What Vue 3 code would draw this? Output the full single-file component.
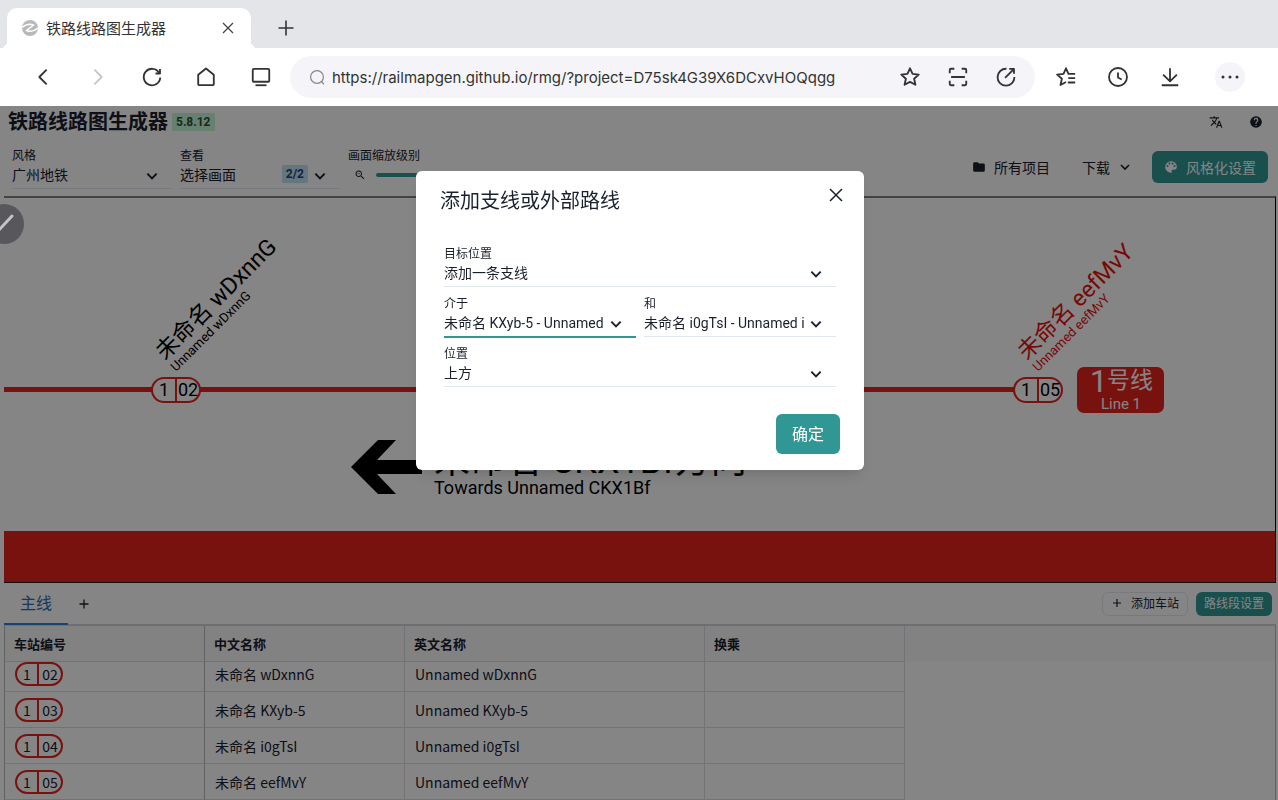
<script setup>
import { onMounted, ref } from 'vue'

const url = ref('https://railmapgen.github.io/rmg/?project=D75sk4G39X6DCxvHOQqgg')
const zoom = ref(96)
const gridBody = ref(null)

const stations = [
  { num: '02', name: '未命名 wDxnnG', en: 'Unnamed wDxnnG' },
  { num: '03', name: '未命名 KXyb-5', en: 'Unnamed KXyb-5' },
  { num: '04', name: '未命名 i0gTsI', en: 'Unnamed i0gTsI' },
  { num: '05', name: '未命名 eefMvY', en: 'Unnamed eefMvY' },
]

const mapStations = [
  { x: 171, num: '02', name: '未命名 wDxnnG', en: 'Unnamed wDxnnG', fill: '#000' },
  { x: 1033, num: '05', name: '未命名 eefMvY', en: 'Unnamed eefMvY', fill: '#e70f0f' },
]

onMounted(() => {
  gridBody.value.scrollTop = gridBody.value.scrollHeight
})
</script>

<template>
  <div class="browser">
    <div class="tabstrip">
      <div class="tab">
        <svg class="favicon" width="16" height="16" viewBox="0 0 16 16">
          <circle cx="8" cy="8" r="8" fill="#b9b9bb" />
          <path d="M0 7.500C3.500 4.500 8 3.500 11.500 5L4.500 10.500C8 12 12.500 11 16 8" fill="none" stroke="#fff" stroke-width="1.500" stroke-linejoin="round" />
        </svg>
        <span class="tab-title">铁路线路图生成器</span>
        <button class="icon-btn tab-close" aria-label="关闭标签页">
          <svg width="12" height="12" viewBox="0 0 12 12" fill="none" stroke="#444" stroke-width="1.300"><path d="M1 1l10 10M11 1L1 11" /></svg>
        </button>
      </div>
      <button class="icon-btn new-tab" aria-label="新标签页">
        <svg width="16" height="16" viewBox="0 0 16 16" fill="none" stroke="#333" stroke-width="1.600"><path d="M8 .5v15M.5 8h15" /></svg>
      </button>
    </div>

    <div class="toolbar">
      <nav class="nav">
        <button class="icon-btn" aria-label="后退">
          <svg class="ico" viewBox="0 0 24 24"><path d="M16 4l-8 8 8 8" stroke-width="2" /></svg>
        </button>
        <button class="icon-btn" aria-label="前进">
          <svg class="ico faint" viewBox="0 0 24 24"><path d="M8 4l8 8-8 8" stroke-width="2" /></svg>
        </button>
        <button class="icon-btn" aria-label="刷新">
          <svg class="ico" viewBox="0 0 24 24"><path d="M19.800 7.500A9 9 0 1 0 21 12.500M20.700 3.300v4.900h-4.900" /></svg>
        </button>
        <button class="icon-btn" aria-label="主页">
          <svg class="ico" viewBox="0 0 24 24"><path d="M3.500 9.500L12 2.800l8.500 6.700v10.200a1.200 1.200 0 0 1-1.200 1.200H4.700a1.200 1.200 0 0 1-1.200-1.200z" /></svg>
        </button>
        <button class="icon-btn" aria-label="电脑模式">
          <svg class="ico" viewBox="0 0 24 24"><rect x="3" y="3.200" width="18" height="14" rx="1.200" /><path d="M6 21h12" /></svg>
        </button>
      </nav>
      <div class="address">
        <svg width="17" height="17" viewBox="0 0 17 17" fill="none" stroke="#888" stroke-width="1.200"><circle cx="8" cy="8" r="6.400" /><path d="M12.500 12.500l2.500 2.800" /></svg>
        <input v-model="url" class="url" aria-label="网址" />
        <button class="icon-btn" aria-label="收藏">
          <svg class="ico" viewBox="0 0 24 24"><path d="M12 2.500l2.800 6.100 6.700.8-5 4.500 1.400 6.600L12 17.300l-5.900 3.200 1.400-6.600-5-4.500 6.700-.8z" /></svg>
        </button>
        <button class="icon-btn" aria-label="扫描">
          <svg class="ico" viewBox="0 0 24 24"><path d="M3 8V4.300A1.300 1.300 0 0 1 4.300 3H8M16 3h3.700A1.300 1.300 0 0 1 21 4.300V8M21 16v3.700a1.300 1.300 0 0 1-1.300 1.300H16M8 21H4.300A1.300 1.300 0 0 1 3 19.700V16M4.500 12h15" /></svg>
        </button>
        <button class="icon-btn" aria-label="分享">
          <svg class="ico" viewBox="0 0 24 24"><path d="M12.500 3A9.200 9.200 0 1 0 21.200 12M11 13l9.500-9.500M15.500 3.200h5.200v5.200" /></svg>
        </button>
      </div>
      <div class="actions">
        <button class="icon-btn" aria-label="收藏夹">
          <svg class="ico" viewBox="0 0 24 24"><path d="M22 8.500h-7.300L12 2.500 9.300 8.500l-7 .9 5.200 4.500L6 20.700l6-3.200M14.500 13.200H22M14 18h8" /></svg>
        </button>
        <button class="icon-btn" aria-label="历史">
          <svg class="ico" viewBox="0 0 24 24"><circle cx="12" cy="12" r="9.800" /><path d="M12 7v5.500l4 2.200" /></svg>
        </button>
        <button class="icon-btn" aria-label="下载列表">
          <svg class="ico" viewBox="0 0 24 24"><path d="M12 2.500v14M4.500 9.500l7.500 7.200 7.500-7.200M3 21h18" /></svg>
        </button>
        <button class="icon-btn more" aria-label="更多">
          <svg width="30" height="30" viewBox="0 0 30 30"><circle cx="15" cy="15" r="15" fill="#f5f5f9" /><g fill="#333"><circle cx="8" cy="15" r="1.500" /><circle cx="15" cy="15" r="1.500" /><circle cx="22" cy="15" r="1.500" /></g></svg>
        </button>
      </div>
    </div>

    <div class="rmg">
      <header class="header">
        <h1>铁路线路图生成器</h1>
        <span class="badge green">5.8.12</span>
        <div class="header-icons">
          <button class="icon-btn" aria-label="语言">
            <svg width="14" height="14" viewBox="0 0 24 24" fill="#1a202c"><path d="M12.870 15.070l-2.540-2.510.03-.03A17.500 17.500 0 0 0 14.070 6H17V4h-7V2H8v2H1v2h11.170C11.500 7.920 10.440 9.750 9 11.350 8.070 10.320 7.300 9.190 6.690 8h-2c.73 1.630 1.730 3.170 2.980 4.560l-5.090 5.020L4 19l5-5 3.110 3.110.76-2.040zM18.500 10h-2L12 22h2l1.120-3h4.750L21 22h2l-4.500-12zm-2.620 7l1.620-4.330L19.120 17h-3.240z" /></svg>
          </button>
          <button class="icon-btn" aria-label="帮助">
            <svg width="14" height="14" viewBox="0 0 24 24" fill="#1a202c"><path d="M12 2a10 10 0 1 0 0 20 10 10 0 0 0 0-20zm1 17h-2v-2h2v2zm2.070-7.750l-.9.920C13.450 12.900 13 13.500 13 15h-2v-.5c0-1.100.45-2.100 1.170-2.830l1.240-1.260A2 2 0 1 0 10 9H8a4 4 0 1 1 7.070 2.250z" /></svg>
          </button>
        </div>
      </header>

      <div class="controls">
        <div class="field w160">
          <label for="style">风格</label>
          <div class="select-wrap">
            <select id="style"><option>广州地铁</option></select>
            <svg class="chev" viewBox="0 0 12 12"><path d="M2 4l4 4 4-4" /></svg>
          </div>
        </div>
        <div class="field w160">
          <label for="view">查看</label>
          <div class="select-wrap">
            <select id="view"><option>选择画面</option></select>
            <span class="badge blue">2/2</span>
            <svg class="chev" viewBox="0 0 12 12"><path d="M2 4l4 4 4-4" /></svg>
          </div>
        </div>
        <div class="field w160">
          <label for="zoom">画面缩放级别</label>
          <div class="slider">
            <svg width="12" height="12" viewBox="0 0 24 24" fill="#1a202c"><path d="M15.500 14h-.8l-.3-.3A6.500 6.500 0 1 0 13.700 14.400l.3.300v.8l5 5 1.500-1.500-5-5zm-6 0a4.500 4.500 0 1 1 0-9 4.500 4.500 0 0 1 0 9zM7 9h5v1H7z" /></svg>
            <input id="zoom" v-model="zoom" type="range" min="0" max="100" />
          </div>
        </div>
        <div class="spacer"></div>
        <button class="ghost">
          <svg width="14" height="14" viewBox="0 0 24 24" fill="#1a202c"><path d="M10 4H4a2 2 0 0 0-2 2v12a2 2 0 0 0 2 2h16a2 2 0 0 0 2-2V8a2 2 0 0 0-2-2h-8l-2-2z" /></svg>
          所有项目
        </button>
        <button class="ghost">
          下载
          <svg class="chev small" viewBox="0 0 12 12"><path d="M2 4l4 4 4-4" /></svg>
        </button>
        <button class="solid">
          <svg width="14" height="14" viewBox="0 0 24 24" fill="#fff"><path d="M12 2a10 10 0 0 0 0 20 1.700 1.700 0 0 0 1.200-2.800 1.700 1.700 0 0 1 1.300-2.700H17a5 5 0 0 0 5-5C22 6 17.500 2 12 2zM6 12a1.700 1.700 0 1 1 0-3.400A1.700 1.700 0 0 1 6 12zm3.300-4.300a1.700 1.700 0 1 1 0-3.400 1.700 1.700 0 0 1 0 3.400zm5.400 0a1.700 1.700 0 1 1 0-3.400 1.700 1.700 0 0 1 0 3.400zM18 12a1.700 1.700 0 1 1 0-3.400 1.700 1.700 0 0 1 0 3.400z" /></svg>
          风格化设置
        </button>
      </div>

      <div class="canvas">
        <svg width="100%" height="385">
          <rect x="0" y="190" width="1040" height="5" fill="#e6231d" />
          <g v-for="s in mapStations" :key="s.num" :transform="`translate(${s.x} 193)`">
            <g transform="translate(-10 -29) rotate(-45)" :fill="s.fill">
              <text font-size="23">{{ s.name }}</text>
            </g>
            <g transform="translate(1 -18) rotate(-45)" :fill="s.fill">
              <text font-size="13">{{ s.en }}</text>
            </g>
            <rect x="-23" y="-12" width="48" height="24" rx="12" fill="#fff" stroke="#e6231d" stroke-width="2" />
            <path d="M1 -12v24" stroke="#e6231d" stroke-width="2" />
            <text x="-11" y="6" font-size="18" text-anchor="middle">1</text>
            <text x="13" y="6" font-size="18" text-anchor="middle">{{ s.num }}</text>
          </g>
          <rect x="1073" y="170" width="87" height="46" rx="7" fill="#e6231d" />
          <g fill="#fff">
            <text x="1086" y="195" font-size="31">1</text>
            <text x="1103" y="191" font-size="23">号线</text>
            <text x="1117" y="212" font-size="15" text-anchor="middle">Line 1</text>
          </g>
          <path d="M347 270l27-27h18l-19 20h45v14h-45l19 20h-18z" />
          <text x="430" y="276" font-size="36">未命名 CKX1Bf方向</text>
          <text x="430" y="297" font-size="18">Towards Unnamed CKX1Bf</text>
          <rect x="0" y="334" width="100%" height="51" fill="#e6231d" />
        </svg>
      </div>

      <div class="tabs">
        <button class="line-tab">主线</button>
        <button class="icon-btn add-branch" aria-label="添加支线">
          <svg width="10" height="10" viewBox="0 0 10 10" fill="none" stroke="#1a202c" stroke-width="1.300"><path d="M5 .5v9M.5 5h9" /></svg>
        </button>
        <div class="spacer"></div>
        <button class="outline">
          <svg width="8" height="8" viewBox="0 0 8 8" fill="none" stroke="#1a202c" stroke-width="1.200"><path d="M4 0v8M0 4h8" /></svg>
          添加车站
        </button>
        <button class="solid small-btn">路线段设置</button>
      </div>

      <div ref="gridBody" class="grid">
        <table>
          <colgroup><col class="c200" /><col class="c200" /><col class="c300" /><col class="c200" /><col /></colgroup>
          <thead>
            <tr>
              <th class="frozen">车站编号</th>
              <th>中文名称</th>
              <th>英文名称</th>
              <th>换乘</th>
              <th class="filler" aria-hidden="true"></th>
            </tr>
          </thead>
          <tbody>
            <tr v-for="s in stations" :key="s.num">
              <td class="frozen"><span class="pill"><i>1</i><b>{{ s.num }}</b></span></td>
              <td>{{ s.name }}</td>
              <td>{{ s.en }}</td>
              <td></td>
              <td class="filler"></td>
            </tr>
          </tbody>
        </table>
      </div>

      <div class="overlay">
        <section class="modal" role="dialog" aria-labelledby="dlg-title">
          <div class="modal-head">
            <h2 id="dlg-title">添加支线或外部路线</h2>
            <button class="icon-btn close" aria-label="关闭">
              <svg width="14" height="14" viewBox="0 0 14 14" fill="none" stroke="#1a202c" stroke-width="1.500"><path d="M1 1l12 12M13 1L1 13" /></svg>
            </button>
          </div>
          <div class="modal-body">
            <div class="field wide">
              <label for="target">目标位置</label>
              <div class="select-wrap">
                <select id="target"><option>添加一条支线</option></select>
                <svg class="chev" viewBox="0 0 12 12"><path d="M2 4l4 4 4-4" /></svg>
              </div>
            </div>
            <div class="field">
              <label for="from">介于</label>
              <div class="select-wrap active">
                <select id="from"><option>未命名 KXyb-5 - Unnamed KXyb-5</option></select>
                <svg class="chev" viewBox="0 0 12 12"><path d="M2 4l4 4 4-4" /></svg>
              </div>
            </div>
            <div class="field">
              <label for="to">和</label>
              <div class="select-wrap">
                <select id="to"><option>未命名 i0gTsI - Unnamed i0gTsI</option></select>
                <svg class="chev" viewBox="0 0 12 12"><path d="M2 4l4 4 4-4" /></svg>
              </div>
            </div>
            <div class="field wide">
              <label for="pos">位置</label>
              <div class="select-wrap">
                <select id="pos"><option>上方</option></select>
                <svg class="chev" viewBox="0 0 12 12"><path d="M2 4l4 4 4-4" /></svg>
              </div>
            </div>
          </div>
          <div class="modal-foot"><button class="solid confirm">确定</button></div>
        </section>
      </div>

      <button class="float-btn" aria-label="编辑">
        <svg width="40" height="40" viewBox="0 0 40 40"><path d="M14 27L28 12" stroke="#c4c4c6" stroke-width="3" stroke-linecap="round" /></svg>
      </button>
    </div>
  </div>
</template>

<style>
body {
  margin: 0;
}
</style>

<style scoped>
* {
  box-sizing: border-box;
}
.browser {
  height: 100vh;
  display: flex;
  flex-direction: column;
  overflow: hidden;
  background: #fff;
  color: #1a202c;
  font-family: Roboto, "Noto Sans CJK SC", sans-serif;
  font-size: 14px;
}
button,
select,
input {
  font: inherit;
  color: inherit;
  border: 0;
  background: none;
  padding: 0;
  margin: 0;
}
svg {
  display: block;
  flex: none;
}
.icon-btn {
  display: flex;
  align-items: center;
  justify-content: center;
}
.spacer {
  flex: 1;
}

.tabstrip {
  flex: none;
  height: 48px;
  display: flex;
  align-items: flex-end;
  background: #e4e5e9;
}
.tab {
  position: relative;
  width: 244px;
  height: 40px;
  margin-left: 7px;
  padding: 0 17px 0 15px;
  display: flex;
  align-items: center;
  background: #fff;
  border-radius: 10px 10px 0 0;
}
.tab::before,
.tab::after {
  content: "";
  position: absolute;
  bottom: 0;
  width: 7px;
  height: 7px;
}
.tab::before {
  left: -7px;
  background: radial-gradient(circle at 0 0, transparent 7px, #fff 7px);
}
.tab::after {
  right: -7px;
  background: radial-gradient(circle at 100% 0, transparent 7px, #fff 7px);
}
.tab-title {
  flex: 1;
  margin-left: 8px;
  padding-bottom: 2px;
  font-size: 15px;
  color: #333;
}
.new-tab {
  width: 40px;
  height: 40px;
  margin-left: 15px;
}

.toolbar {
  flex: none;
  height: 58px;
  display: flex;
  align-items: center;
}
.nav {
  display: flex;
  width: 288px;
  margin-right: 2px;
  padding-left: 16px;
}
.nav .icon-btn {
  flex: 1;
}
.ico {
  width: 22px;
  height: 22px;
  fill: none;
  stroke: #333;
  stroke-width: 2;
  stroke-linejoin: round;
}
.faint {
  stroke: #c6c6c6;
}
.address {
  flex: 1;
  height: 42px;
  display: flex;
  align-items: center;
  padding: 0 5px 0 19px;
  border-radius: 21px;
  background: #f5f5f9;
}
.address .icon-btn {
  width: 48px;
}
.url {
  flex: 1;
  min-width: 0;
  margin-left: 6px;
  font-family: Inter, sans-serif;
  font-size: 15px;
  color: #333;
  outline: 0;
}
.actions {
  display: flex;
  padding: 0 14px 0 5px;
}
.actions .icon-btn {
  width: 52px;
}
.actions .more {
  width: 68px;
}

.rmg {
  position: relative;
  flex: 1;
  min-height: 0;
  display: flex;
  flex-direction: column;
}
.header {
  display: flex;
  align-items: center;
  height: 32px;
  padding: 0 2px 0 8px;
}
h1 {
  margin: 0;
  font-size: 20px;
  line-height: 30px;
  font-weight: 700;
}
.badge {
  padding: 0 4px;
  font-size: 12px;
  line-height: 18px;
  font-weight: 700;
  border-radius: 2px;
}
.green {
  margin-left: 4px;
  background: #c6f6d5;
  color: #22543d;
}
.blue {
  position: absolute;
  right: 32px;
  top: 0;
  background: #bee3f8;
  color: #2a4365;
}
.header-icons {
  display: flex;
  margin-left: auto;
}
.header-icons .icon-btn {
  width: 40px;
}

.controls {
  display: flex;
  align-items: center;
  gap: 8px;
  height: 58px;
  padding: 0 10px 0 12px;
}
.w160 {
  width: 160px;
  padding-top: 1px;
}
.field label {
  display: block;
  font-size: 12px;
  line-height: 18px;
}
.select-wrap {
  position: relative;
  height: 24px;
  border-bottom: 1px solid #e2e8f0;
}
.select-wrap.active {
  border-bottom: 2px solid #319795;
  height: 25px;
  margin-bottom: -1px;
}
select {
  display: block;
  appearance: none;
  width: 100%;
  height: 20px;
  padding-right: 32px;
  font-size: 14px;
  line-height: 20px;
  outline: 0;
}
.chev {
  position: absolute;
  right: 13px;
  top: 4px;
  width: 14px;
  height: 14px;
  fill: none;
  stroke: #1a202c;
  stroke-width: 1.700;
}
.chev.small {
  position: static;
  height: 12px;
}
.slider {
  display: flex;
  align-items: center;
  gap: 10px;
  height: 24px;
  padding-left: 6px;
}
.slider svg {
  margin-top: -4px;
}
.slider input {
  width: 126px;
  height: 4px;
  margin-top: -4px;
  appearance: none;
  background: #319795;
  border-radius: 2px;
}
.slider input::-webkit-slider-thumb {
  appearance: none;
  width: 8px;
  height: 8px;
  border-radius: 50%;
  background: #fff;
}
.ghost,
.solid {
  display: flex;
  align-items: center;
  gap: 8px;
  height: 32px;
  padding: 0 12px 1px;
}
.solid {
  border-radius: 6px;
  background: #319795;
  color: #fff;
}

.canvas {
  flex: none;
  margin: 0 2px 0 4px;
  border-top: 2px solid #808080;
  border-right: 1px solid #000;
  border-bottom: 1px solid #222;
  overflow: hidden;
}
.canvas svg {
  margin-top: -1px;
}

.tabs {
  flex: none;
  display: flex;
  align-items: center;
  height: 43px;
  margin: 0 2px 0 4px;
  padding-right: 4px;
  border-bottom: 2px solid #d4d4dc;
}
.line-tab {
  align-self: stretch;
  width: 64px;
  margin-bottom: -1px;
  padding-bottom: 2px;
  font-size: 16px;
  color: #2b6cb0;
  border-bottom: 2px solid #3182ce;
}
.add-branch {
  width: 32px;
}
.outline {
  display: flex;
  align-items: center;
  gap: 10px;
  height: 24px;
  padding: 0 8px 2px 10px;
  margin-right: 8px;
  border: 1px solid #e2e8f0;
  border-radius: 6px;
  font-size: 12px;
}
.small-btn {
  height: 24px;
  padding: 0 8px 2px;
  font-size: 12px;
}

.grid {
  flex: 1;
  min-height: 0;
  margin: 0 2px 0 4px;
  overflow: hidden;
  border-left: 1px solid #bbb;
  border-right: 1px solid #bbb;
  font-family: "Noto Sans CJK SC", sans-serif;
}
table {
  width: 100%;
  table-layout: fixed;
  border-collapse: separate;
  border-spacing: 0;
}
.c200 {
  width: 200px;
}
.c300 {
  width: 300px;
}
th,
td {
  height: 36px;
  padding: 0 10px;
  text-align: left;
  line-height: 20px;
  border-right: 1px solid #dddde4;
  border-bottom: 1px solid #dddde4;
}
th {
  position: sticky;
  top: 0;
  z-index: 1;
  padding-left: 9px;
  font-size: 13px;
  background: #f9f9f9;
}
.frozen {
  border-right-color: #bbb;
}
.filler {
  border: 0;
}
.pill {
  display: flex;
  width: 48px;
  height: 24px;
  border: 2px solid #e6231d;
  border-radius: 12px;
}
.pill i,
.pill b {
  font-style: normal;
  font-weight: 400;
  text-align: center;
}
.pill i {
  width: 22px;
  border-right: 2px solid #e6231d;
}
.pill b {
  flex: 1;
}

.overlay {
  position: absolute;
  inset: 0;
  z-index: 2;
  display: flex;
  justify-content: center;
  align-items: flex-start;
  padding: 65px 0 0 2px;
  background: rgba(0, 0, 0, 0.48);
}
.modal {
  width: 448px;
  border-radius: 6px;
  background: #fff;
  box-shadow: 0 10px 15px -3px rgba(0, 0, 0, 0.1), 0 4px 6px -2px rgba(0, 0, 0, 0.05);
}
.modal-head {
  display: flex;
  justify-content: space-between;
  padding: 16px 12px 16px 24px;
}
h2 {
  margin: 0;
  font-size: 20px;
  line-height: 28px;
  font-weight: 400;
}
.close {
  width: 32px;
  height: 32px;
  margin: -8px 0;
}
.modal-body {
  display: grid;
  grid-template-columns: 1fr 1fr;
  gap: 8px;
  padding: 14px 28px 11px;
}
.wide {
  grid-column: span 2;
}
.modal-foot {
  display: flex;
  justify-content: flex-end;
  padding: 16px 24px;
}
.confirm {
  height: 40px;
  padding: 0 16px 2px;
  font-size: 16px;
}

.float-btn {
  position: absolute;
  z-index: 3;
  left: -16px;
  top: 98px;
  width: 40px;
  height: 40px;
  border-radius: 50%;
  background: #58585c;
}
</style>
